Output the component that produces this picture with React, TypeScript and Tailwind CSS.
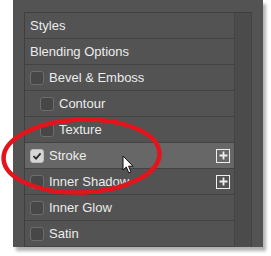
import React from "react"

type Row = {
  label: string
  indent?: boolean
  check?: boolean
  checked?: boolean
  plus?: boolean
  active?: boolean
}

const rows: Row[] = [
  { label: "Styles" },
  { label: "Blending Options" },
  { label: "Bevel & Emboss", check: true },
  { label: "Contour", check: true, indent: true },
  { label: "Texture", check: true, indent: true },
  { label: "Stroke", check: true, checked: true, plus: true, active: true },
  { label: "Inner Shadow", check: true, plus: true },
  { label: "Inner Glow", check: true },
  { label: "Satin", check: true },
]

function Checkbox({ checked }: { checked?: boolean }) {
  if (checked) {
    return (
      <div className="w-[14px] h-[14px] rounded-[3px] bg-[#d6d6d6] border border-[#bdbdbd] flex items-center justify-center shrink-0">
        <svg width="10" height="10" viewBox="0 0 10 10">
          <path d="M1.5 5.2 L4 7.6 L8.6 2.4" fill="none" stroke="#2a2a2a" strokeWidth="1.8" />
        </svg>
      </div>
    )
  }
  return (
    <div
      className="w-[14px] h-[14px] rounded-[3px] border border-[#6c6c6c] bg-[#474747] shrink-0"
      style={{
        backgroundImage: "radial-gradient(#3c3c3c 0.6px, transparent 0.7px)",
        backgroundSize: "2px 2px",
      }}
    />
  )
}

function PlusBox() {
  return (
    <div className="w-[14px] h-[14px] border-[1.5px] border-[#eeeeee] flex items-center justify-center">
      <svg width="9" height="9" viewBox="0 0 9 9">
        <path d="M4.5 0.5 V8.5 M0.5 4.5 H8.5" stroke="#eeeeee" strokeWidth="1.8" />
      </svg>
    </div>
  )
}

export default function App() {
  return (
    <div className="w-[271px] h-[256px] bg-white relative overflow-hidden" style={{ fontFamily: '"Liberation Sans", Arial, sans-serif' }}>
      <div className="ml-[13px] w-[250px] h-[247px] bg-[#535353] pt-[12px] pl-[11px] shadow-[3px_4px_3px_rgba(0,0,0,0.3)]">
        <div className="flex w-[228px] h-[235px] border-l border-t border-[#3f3f3f]">
          <div className="w-[210px]">
            {rows.map((r) => (
              <div
                key={r.label}
                className={`h-[26px] flex items-center border-b border-[#434343] pr-[4px] ${r.active ? "bg-[#676767]" : ""} ${r.indent ? "pl-[15px]" : "pl-[5px]"}`}
              >
                {r.check && <Checkbox checked={r.checked} />}
                <span className={`text-[13px] text-[#ececec] ${r.check ? "ml-[5px]" : ""} flex-1`}>{r.label}</span>
                {r.plus && <PlusBox />}
              </div>
            ))}
          </div>
          <div className="w-[18px] bg-[#4b4b4b] border-l border-r border-[#444444]" />
        </div>
      </div>

      {/* cursor */}
      <svg className="absolute left-[122px] top-[155px]" width="13" height="20" viewBox="0 0 13 20">
        <path d="M1 1 L1 15 L4.3 12 L6.8 17.8 L9 16.8 L6.6 11.2 L11 11.2 Z" fill="#ffffff" stroke="#111111" strokeWidth="1" strokeLinejoin="round" />
      </svg>

      {/* red ellipse */}
      <svg className="absolute left-0 top-0 pointer-events-none" width="271" height="256" viewBox="0 0 271 256">
        <ellipse cx="81.5" cy="156" rx="78" ry="36.5" fill="none" stroke="#e3141b" strokeWidth="4.5" transform="rotate(-2 81.5 156)" />
      </svg>
    </div>
  )
}
